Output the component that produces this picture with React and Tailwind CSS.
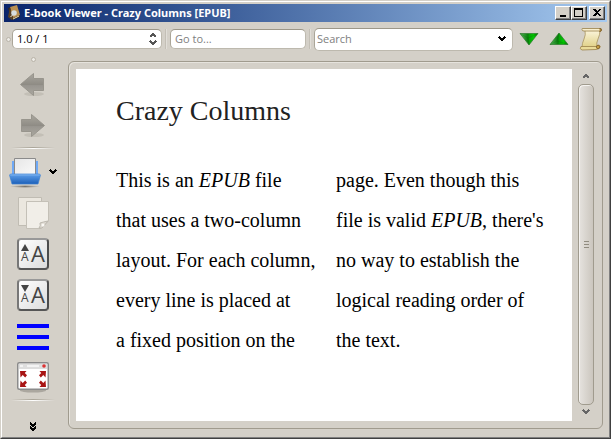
import React from "react";

const columns = [
  [
    <>This is an <i>EPUB</i> file</>,
    "that uses a two-column",
    "layout. For each column,",
    "every line is placed at",
    "a fixed position on the",
  ],
  [
    "page. Even though this",
    <>file is valid <i>EPUB</i>, there's</>,
    "no way to establish the",
    "logical reading order of",
    "the text.",
  ],
];

const fieldBox =
  "flex items-center rounded-[5px] border border-[#bdb9ae] border-t-[#9c9789] border-l-[#aaa598] bg-white";

function BookIcon() {
  return (
    <svg width="16" height="16" viewBox="0 0 16 16" aria-hidden="true">
      <path d="M2 3 11 1 14 12 6 15Z" fill="#36291d" />
      <path d="M4 2 11 0 14 10 7 13Z" fill="#b98f51" />
      <path d="M4 2 2 12 6 15 7 13Z" fill="#5b4226" />
      <path d="M7 14 13 11" stroke="#efe1b8" />
      <circle cx="8" cy="8" r="2.800" fill="#d7dde0" />
      <path d="m4.500 12 2-2" stroke="#eee" />
    </svg>
  );
}

function Chevron({ up = false, color = "#000" }) {
  return (
    <svg width="8" height="6" viewBox="0 0 8 6" shapeRendering="crispEdges" aria-hidden="true">
      <path d={up ? "M1 5 4 2 7 5" : "M1 1 4 4 7 1"} fill="none" stroke={color} strokeWidth="2" />
    </svg>
  );
}

function Triangle({ up = false }) {
  const id = up ? "tri-up" : "tri-down";
  return (
    <svg width="20" height="14" viewBox="0 0 20 14" aria-hidden="true">
      <defs>
        <linearGradient id={id}>
          <stop offset="0" stopColor="#58b95b" />
          <stop offset=".45" stopColor="#087d0b" />
          <stop offset=".5" stopColor="#06a008" />
          <stop offset=".75" stopColor="#00c800" />
          <stop offset="1" stopColor="#087508" />
        </linearGradient>
      </defs>
      <path
        d={up ? "M1 12.5 10 1 19 12.5Z" : "M1 1.5 19 1.5 10 13Z"}
        fill={`url(#${id})`}
        stroke="#2c7a2c"
        strokeWidth=".7"
      />
      <path d={up ? "M10 1 8 9 1 12.5M8 9 19 12.5" : "M10 13 9 6 1 1.5M9 6 19 1.5"} fill="none" stroke="#075b08" strokeWidth=".5" opacity=".45" />
    </svg>
  );
}

function ScrollIcon() {
  return (
    <svg width="24" height="24" viewBox="0 0 24 24" aria-hidden="true">
      <defs>
        <linearGradient id="parchment" x1="0" y1="0" x2="0" y2="1">
          <stop offset="0" stopColor="#fbf5dd" />
          <stop offset="1" stopColor="#dfcf83" />
        </linearGradient>
      </defs>
      <path d="M6 3H21Q21 8 19 12T18 20L3 21Q3 16 5 12T6 3Z" fill="url(#parchment)" stroke="#aa9560" strokeWidth=".8" />
      <path d="M4 1.5H21Q22.500 1 22.500 2.500T21 4H5Q3 4 3 2.500T4 1.5Z" fill="#f8efcf" stroke="#9b8149" strokeWidth=".8" />
      <path d="M20.500 1.500q2 0 2 1.500T20.500 4.500" fill="#b79042" stroke="#765722" strokeWidth=".8" />
      <path d="M2 19.500H18Q18 18 20 18 22 19 21 20.500 20 22 17 22.500L3 23Q0 22 2 19.500Z" fill="#eadb99" stroke="#9b8149" strokeWidth=".8" />
      <circle cx="19" cy="20" r="1.700" fill="#c39b43" stroke="#765722" strokeWidth=".7" />
    </svg>
  );
}

function ArrowIcon({ right = false }) {
  const id = right ? "arrow-r" : "arrow-l";
  return (
    <svg width="32" height="32" viewBox="0 0 32 32" aria-hidden="true">
      <defs>
        <linearGradient id={id} x1="0" y1="0" x2="0" y2="1">
          <stop offset="0" stopColor="#aaa79f" />
          <stop offset=".5" stopColor="#8f8c85" />
          <stop offset=".55" stopColor="#999690" />
          <stop offset="1" stopColor="#aaa79f" />
        </linearGradient>
      </defs>
      <ellipse cx="17" cy="26" rx="10" ry="2" fill="#9c978d" opacity=".3" />
      <path
        d={right ? "M4.5 10.500H14.500V5.500L27.500 16.500 14.500 27.500V22.500H4.500Z" : "M26.500 10.500H16.500V5.500L3.500 16.500 16.500 27.500V22.500H26.500Z"}
        fill={`url(#${id})`}
        stroke="#98958d"
      />
    </svg>
  );
}

function PrinterIcon() {
  return (
    <svg width="32" height="32" viewBox="0 0 32 32" aria-hidden="true">
      <defs>
        <linearGradient id="tray" x1="0" y1="0" x2="0" y2="1">
          <stop offset="0" stopColor="#8fc0f5" />
          <stop offset=".25" stopColor="#4f91df" />
          <stop offset="1" stopColor="#1d60b8" />
        </linearGradient>
        <linearGradient id="paper" x2="1" y2="1">
          <stop offset="0" stopColor="#e6e6e6" />
          <stop offset="1" stopColor="#fafafa" />
        </linearGradient>
        <radialGradient id="shade">
          <stop offset="0" stopColor="#77736c" />
          <stop offset="1" stopColor="#77736c" stopOpacity="0" />
        </radialGradient>
      </defs>
      <ellipse cx="16" cy="30.500" rx="15" ry="1.500" fill="url(#shade)" />
      <path d="M3 5H29V20H3Z" fill="#6fa9f6" />
      <path d="M5.500 2.500H26.500V19H5.500Z" fill="url(#paper)" stroke="#8b8b8b" />
      <path d="M.5 19Q1 18 2 18H30Q31 18 31.500 19L29 28H3Z" fill="url(#tray)" stroke="#3d83d4" strokeWidth=".7" />
    </svg>
  );
}

function CopyIcon() {
  return (
    <svg width="32" height="32" viewBox="0 0 32 32" aria-hidden="true">
      <path d="M1.500.5H24.500V28.500H1.500Z" fill="#ebe7df" stroke="#c0bcb3" />
      <path d="M9.500 4.500H31.500V24L24 31.500H9.500Z" fill="#f1eee8" stroke="#c4c0b7" />
      <path d="M22 31Q24 29 23 26 26 25 31 24L25 31Z" fill="#dedad2" stroke="#bcb8af" />
      <circle cx="26" cy="28" r="1.500" fill="#faf8f4" />
    </svg>
  );
}

function FontIcon({ smaller = false }) {
  return (
    <span className="relative block size-8 rounded-[4px] border-2 border-t-[#999] border-r-[#4c4c4c] border-b-[#555] border-l-[#777] bg-linear-to-br from-white to-[#dcdcdc] font-['Open_Sans',sans-serif] text-[#444]">
      <svg className="absolute top-1 left-0.5" width="8" height="7" viewBox="0 0 8 7" aria-hidden="true">
        <path d={smaller ? "M0 0H8L4 7Z" : "M4 0 8 7H0Z"} fill="#444" />
      </svg>
      <span className="absolute bottom-[5px] left-0.5 text-[12px] leading-3">A</span>
      <span className="absolute right-0.5 bottom-[5px] text-[22px] leading-5">A</span>
    </span>
  );
}

function LinesIcon() {
  return (
    <svg width="32" height="32" viewBox="0 0 32 32" aria-hidden="true">
      <path d="M0 6H32M0 17H32M0 28H32" stroke="#00f" strokeWidth="4" />
    </svg>
  );
}

function FullscreenIcon() {
  return (
    <svg width="32" height="32" viewBox="0 -1 32 32" aria-hidden="true">
      <ellipse cx="16" cy="28.500" rx="13" ry="2" fill="#88857e" opacity=".55" />
      <rect x=".75" y=".75" width="30.500" height="26.500" rx="1.500" fill="#fff" stroke="#8b8b8b" strokeWidth="1.500" />
      <path d="M2 2H30V7H2Z" fill="#dedede" />
      <path d="M3 4H6M10 4H22" stroke="#f3f3f3" strokeWidth="2" />
      <circle cx="27" cy="4" r="1.800" fill="#d33" />
      <g fill="#a81414">
        {["", "translate(32 0) scale(-1 1)", "translate(0 34) scale(1 -1)", "translate(32 34) scale(-1 -1)"].map((t) => (
          <path key={t} transform={t} d="M3 9H9.500L7.800 11 10 13.200 8.200 15.400 5.700 13 3.500 15.500Z" />
        ))}
      </g>
    </svg>
  );
}

function ToolButton({ label, children }) {
  return (
    <button type="button" aria-label={label} className="flex size-8 shrink-0 items-center justify-center">
      {children}
    </button>
  );
}

function Grip() {
  return <span className="size-[5px] shrink-0 rounded-full border border-[#b8b3a8] bg-[#edebe6]" />;
}

function Separator() {
  return <span className="h-5 w-0.5 shrink-0 bg-linear-to-r from-[#b5b0a5] to-[#f0eeea]" />;
}

function Rule() {
  return (
    <span className="flex w-11 shrink-0 flex-col">
      <span className="h-px bg-linear-to-r from-transparent via-[#aaa599] to-transparent" />
      <span className="h-px bg-linear-to-r from-transparent via-white to-transparent" />
    </span>
  );
}

function WindowButton({ label, children }) {
  return (
    <button
      type="button"
      aria-label={label}
      className="flex h-3.5 w-4 items-center justify-center border border-t-white border-r-[#404040] border-b-[#404040] border-l-white bg-[#d4d0c8] shadow-[inset_-1px_-1px_0_#808080]"
    >
      <svg width="10" height="10" viewBox="0 0 10 10" shapeRendering="crispEdges" aria-hidden="true">
        {children}
      </svg>
    </button>
  );
}

export default function App() {
  return (
    <div className="flex min-h-screen flex-col border border-t-[#d4d0c8] border-r-[#404040] border-b-[#404040] border-l-[#d4d0c8] bg-[#d4d0c8] font-['Open_Sans',sans-serif] text-[11px] text-black">
      <div className="flex flex-1 flex-col border border-t-white border-r-[#808080] border-b-[#808080] border-l-white p-0.5">
        <header className="flex h-[18px] items-center bg-linear-to-r from-[#0a246a] to-[#a6caf0] px-0.5">
          <BookIcon />
          <h1 className="ml-0.5 flex-1 font-['Noto_Sans',sans-serif] text-[11px] leading-4 font-bold whitespace-nowrap text-white">
            E-book Viewer - Crazy Columns [EPUB]
          </h1>
          <WindowButton label="Minimize">
            <path d="M2 7H8V9H2Z" />
          </WindowButton>
          <WindowButton label="Maximize">
            <path d="M0 0H9V9H0ZM1 2V8H8V2Z" fillRule="evenodd" />
          </WindowButton>
          <span className="w-0.5" />
          <WindowButton label="Close">
            <path d="M1 1H3L5 3 7 1H9L6 4.500 9 8H7L5 6 3 8H1L4 4.500Z" />
          </WindowButton>
        </header>

        <div className="flex h-[34px] shrink-0 items-center pr-1 pl-0.5">
          <Grip />
          <div className={`${fieldBox} ml-px h-5 w-[150px] pr-1 pl-1`}>
            <input aria-label="Position" defaultValue="1.0 / 1" className="w-0 flex-1 bg-transparent text-[11px] leading-4 outline-none" />
            <span className="flex flex-col gap-0.5">
              <button type="button" aria-label="Increase" className="block"><Chevron up color="#555" /></button>
              <button type="button" aria-label="Decrease" className="block"><Chevron color="#555" /></button>
            </span>
          </div>
          <span className="flex w-2 justify-center"><Separator /></span>
          <div className={`${fieldBox} h-5 w-[136px] px-1`}>
            <input aria-label="Go to" placeholder="Go to..." className="w-full bg-transparent text-[11px] leading-4 outline-none placeholder:text-[#808080]" />
          </div>
          <span className="flex w-2 justify-center"><Separator /></span>
          <div className={`${fieldBox} h-[23px] flex-1 pr-1.5 pl-0.5`}>
            <input aria-label="Search" placeholder="Search" className="w-0 flex-1 bg-transparent text-[11px] leading-4 outline-none placeholder:text-[#808080]" />
            <button type="button" aria-label="Search history"><Chevron /></button>
          </div>
          <div className="ml-1.5 flex items-center gap-2.5">
            <button type="button" aria-label="Find next"><Triangle /></button>
            <button type="button" aria-label="Find previous"><Triangle up /></button>
            <button type="button" aria-label="Reference mode"><ScrollIcon /></button>
          </div>
        </div>

        <div className="flex flex-1">
          <aside className="flex w-[58px] shrink-0 flex-col items-center pt-px">
            <Grip />
            <div className="mt-1.5 flex flex-col gap-[9px]">
              <ToolButton label="Back"><ArrowIcon /></ToolButton>
              <ToolButton label="Forward"><ArrowIcon right /></ToolButton>
            </div>
            <div className="mt-1.5 mb-[7px]"><Rule /></div>
            <div className="flex flex-col items-center gap-[9px]">
              <div className="flex items-center gap-2">
                <ToolButton label="Print"><PrinterIcon /></ToolButton>
                <button type="button" aria-label="Print options"><Chevron /></button>
              </div>
              <ToolButton label="Copy"><CopyIcon /></ToolButton>
              <ToolButton label="Increase font size"><FontIcon /></ToolButton>
              <ToolButton label="Decrease font size"><FontIcon smaller /></ToolButton>
              <ToolButton label="Line spacing"><LinesIcon /></ToolButton>
              <ToolButton label="Full screen"><FullscreenIcon /></ToolButton>
            </div>
            <div className="mt-1.5"><Rule /></div>
            <button type="button" aria-label="More tools" className="mt-auto mb-[3px] flex flex-col">
              <svg width="6" height="10" viewBox="0 0 6 10" shapeRendering="crispEdges" aria-hidden="true">
                <path d="M0 1 3 4 6 1M0 5 3 8 6 5" fill="none" stroke="#000" strokeWidth="1.500" />
              </svg>
            </button>
          </aside>

          <main className="mt-[5px] mr-1 mb-1.5 ml-1.5 flex flex-1 rounded-md border border-[#a09b8e] py-[7px] pl-[7px] shadow-[inset_1px_1px_0_#e6e3dd]">
            <article id="page" className="flex-1 bg-white px-10 pt-[22px] font-['Liberation_Serif',serif]">
              <h2 className="text-[28px] leading-10 text-[#222]">Crazy Columns</h2>
              <div className="mt-[29px] grid grid-cols-2 gap-6 text-[20px] leading-10 whitespace-nowrap">
                {columns.map((lines, c) => (
                  <div key={c} className="min-w-0">
                    {lines.map((line, i) => <p key={i}>{line}</p>)}
                  </div>
                ))}
              </div>
            </article>
            <div className="ml-1.5 flex w-4 flex-col items-center pt-1 pb-1">
              <button type="button" aria-label="Scroll up" className="flex h-2"><Chevron up color="#666" /></button>
              <div role="scrollbar" aria-label="Page scroll" aria-controls="page" aria-valuenow={0} className="mt-[3px] mb-1 flex w-full flex-1 flex-col items-center justify-center gap-0.5 rounded-[5px] border border-[#a09b8e] bg-linear-to-r from-[#e6e3df] to-[#cbc6be] shadow-[inset_1px_1px_0_#f5f3f0]">
                <span className="h-px w-[5px] bg-[#918c80]" />
                <span className="h-px w-[5px] bg-[#918c80]" />
                <span className="h-px w-[5px] bg-[#918c80]" />
              </div>
              <button type="button" aria-label="Scroll down" className="flex h-2"><Chevron color="#666" /></button>
            </div>
            <span className="w-2" />
          </main>
        </div>
      </div>
    </div>
  );
}
